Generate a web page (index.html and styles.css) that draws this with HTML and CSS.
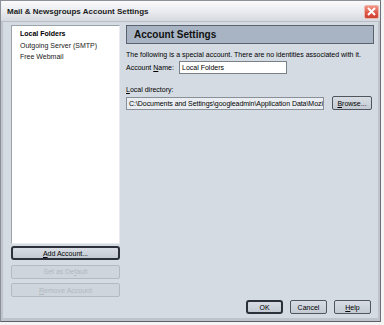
FILE: index.html
```html
<!DOCTYPE html>
<html>
<head>
<meta charset="utf-8">
<link rel="stylesheet" href="styles.css">
</head>
<body>
<div class="window">
  <div class="titlebar">
    <span class="title">Mail &amp; Newsgroups Account Settings</span>
    <span class="close">
      <svg width="9" height="9" viewBox="0 0 9 9"><path d="M1 1L8 8M8 1L1 8" stroke="#fff" stroke-width="2"/></svg>
    </span>
  </div>
  <div class="body">
    <div class="left">
      <ul class="list">
        <li class="sel">Local Folders</li>
        <li>Outgoing Server (SMTP)</li>
        <li>Free Webmail</li>
      </ul>
      <div class="btn wide default"><span><u>A</u>dd Account...</span></div>
      <div class="btn wide disabled"><span>Set as De<u>f</u>ault</span></div>
      <div class="btn wide disabled"><span><u>R</u>emove Account</span></div>
    </div>
    <div class="right">
      <div class="header">Account Settings</div>
      <p class="note">The following is a special account. There are no identities associated with it.</p>
      <div class="row namerow">
        <label>Account <u>N</u>ame:</label>
        <div class="input name">Local Folders</div>
      </div>
      <label class="dirlabel"><u>L</u>ocal directory:</label>
      <div class="row dirrow">
        <div class="input dir">C:\Documents and Settings\googleadmin\Application Data\Mozilla</div>
        <div class="btn browse"><span><u>B</u>rowse...</span></div>
      </div>
      <div class="spacer"></div>
      <div class="footer">
        <div class="btn foot default"><span>OK</span></div>
        <div class="btn foot"><span>Cancel</span></div>
        <div class="btn foot"><span><u>H</u>elp</span></div>
      </div>
    </div>
  </div>
</div>
</body>
</html>
```

FILE: styles.css
```css
html, body {
  margin: 0;
  padding: 0;
  background: #f4f4f4;
}
body {
  font-family: "Liberation Sans", Arial, sans-serif;
  font-size: 7px;
  color: #000;
}
.window {
  width: 381px;
  height: 322px;
  box-sizing: border-box;
  border: 1px solid #8c9098;
  border-right-color: #6c7078;
  border-bottom-color: #5c6068;
  background: #d5dbe3;
  display: flex;
  flex-direction: column;
}
.titlebar {
  height: 21px;
  box-sizing: border-box;
  flex: none;
  display: flex;
  align-items: center;
  justify-content: space-between;
  padding: 1px 1px 0 6px;
  background: linear-gradient(#fbfbfc, #e8eaee 55%, #d6d9df);
  border-bottom: 1px solid #b8bcc4;
}
.title {
  font-weight: bold;
  font-size: 8px;
  color: #1a1a1a;
}
.close {
  width: 15px;
  height: 14px;
  box-sizing: border-box;
  border: 1px solid #ecb8b0;
  border-radius: 2px;
  background: linear-gradient(#f29484, #dc5444 60%, #cc4030);
  display: flex;
  align-items: center;
  justify-content: center;
}
.body {
  flex: 1;
  display: flex;
  align-items: flex-start;
  gap: 6px;
  padding: 3px 4px 0 8px;
  border-left: 2px solid #bfc3cb;
  border-right: 2px solid #bfc3cb;
  border-bottom: 3px solid #bfc3cb;
}
.left {
  width: 109px;
  display: flex;
  flex-direction: column;
}
.list {
  list-style: none;
  margin: 0;
  padding: 2px 0 0 0;
  height: 219px;
  box-sizing: border-box;
  background: #fff;
  border: 1px solid #9ca2aa;
  border-right-color: #e8ecf0;
  border-bottom-color: #e8ecf0;
  margin-bottom: 2px;
}
.list li {
  height: 11.5px;
  line-height: 11.5px;
  padding-left: 8px;
  color: #202020;
}
.list li.sel {
  font-weight: bold;
  color: #000;
}
.btn {
  height: 14px;
  box-sizing: border-box;
  border: 1px solid #50565e;
  border-radius: 2px;
  background: linear-gradient(#d8dde4, #c4cad3);
  display: flex;
  align-items: center;
  justify-content: center;
  color: #000;
}
.btn.default {
  border: 2px solid #2c3038;
  border-radius: 3px;
}
.btn.wide {
  margin-bottom: 4.5px;
}
.btn.disabled {
  border-color: #b4bac2;
  background: #cfd5dd;
  color: #b2b8c0;
}
.right {
  flex: 1;
  height: 289px;
  display: flex;
  flex-direction: column;
}
.header {
  height: 19px;
  box-sizing: border-box;
  border: 1px solid #5a626e;
  background: #a8b4c4;
  font-weight: bold;
  font-size: 10px;
  display: flex;
  align-items: center;
  padding-left: 7px;
  color: #111;
}
.note {
  margin: 6px 0 0 0;
  line-height: 9px;
}
.row {
  display: flex;
  align-items: center;
}
.row label {
  width: 53px;
}
.namerow {
  margin-top: 2px;
}
.input {
  height: 13px;
  box-sizing: border-box;
  background: #fff;
  border: 1px solid #7a8088;
  line-height: 11px;
  padding-left: 2px;
  white-space: nowrap;
  overflow: hidden;
}
.name {
  width: 108px;
}
.dirlabel {
  margin-top: 11px;
  line-height: 9px;
  display: block;
}
.dirrow {
  margin-top: 2px;
  gap: 8px;
}
.dir {
  width: 198px;
  background: #e9edf1;
  border-color: #8a9098;
  letter-spacing: -0.05px;
}
.browse {
  width: 40px;
}
.spacer {
  flex: 1;
}
.footer {
  display: flex;
  justify-content: flex-end;
  gap: 7px;
  padding-right: 3px;
}
.foot {
  width: 37px;
}
u {
  text-decoration: underline;
}
```
